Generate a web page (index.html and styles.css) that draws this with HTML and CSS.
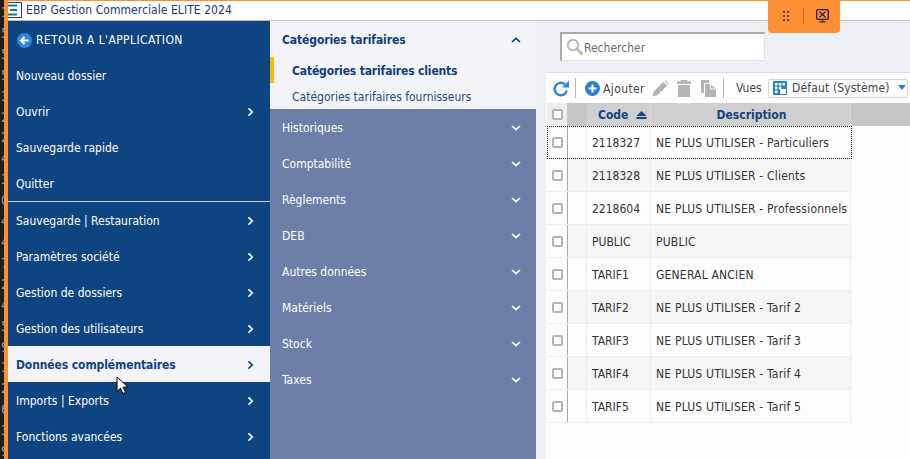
FILE: index.html
```html
<!DOCTYPE html>
<html lang="fr">
<head>
    <meta charset="UTF-8">
    <title>EBP Gestion Commerciale ELITE 2024</title>
    <link rel="stylesheet" href="styles.css">
</head>
<body>
    <svg class="defs" width="0" height="0">
        <symbol id="chev-right" viewBox="0 0 8 10"><path d="M2.500 1.300l3.700 3.700-3.700 3.700" fill="none" stroke="currentColor" stroke-width="1.700"/></symbol>
        <symbol id="chev-down" viewBox="0 0 10 8"><path d="M1 2l4 3.700L9 2" fill="none" stroke="currentColor" stroke-width="1.700"/></symbol>
        <symbol id="chev-up" viewBox="0 0 10 8"><path d="M1 6l4-3.700L9 6" fill="none" stroke="currentColor" stroke-width="1.700"/></symbol>
    </svg>

    <div class="window">
        <div class="edge">1 5 5 5 3 2 2 4 3 0 4 4 7 2 4 5 9 1 2 6 3 9</div>

        <div class="main">
            <header class="titlebar">
                <svg class="app-icon" width="14" height="16" viewBox="0 0 14 16">
                    <path d="M0 .5h13.500v15H0" fill="#fff" stroke="#1f3f7a"/>
                    <path d="M0 3.500h9M2 8h7M0 12.500h9" stroke="#0f7f86" stroke-width="2"/>
                </svg>
                <span>EBP Gestion Commerciale ELITE 2024</span>
            </header>

            <div class="content">
                <nav class="menu">
                    <a class="menu-item back">
                        <svg width="15" height="15" viewBox="0 0 15 15">
                            <circle cx="7.500" cy="7.500" r="7.500" fill="#2f86dc"/>
                            <path d="M11.500 7.500H5M7.500 4L4 7.500 7.500 11" fill="none" stroke="#fff" stroke-width="2"/>
                        </svg>
                        RETOUR A L'APPLICATION
                    </a>
                    <a class="menu-item">Nouveau dossier</a>
                    <a class="menu-item">Ouvrir <svg class="chev"><use href="#chev-right"/></svg></a>
                    <a class="menu-item">Sauvegarde rapide</a>
                    <a class="menu-item">Quitter</a>
                    <div class="menu-sep"></div>
                    <a class="menu-item">Sauvegarde | Restauration <svg class="chev"><use href="#chev-right"/></svg></a>
                    <a class="menu-item">Paramètres société <svg class="chev"><use href="#chev-right"/></svg></a>
                    <a class="menu-item">Gestion de dossiers <svg class="chev"><use href="#chev-right"/></svg></a>
                    <a class="menu-item">Gestion des utilisateurs <svg class="chev"><use href="#chev-right"/></svg></a>
                    <a class="menu-item active">Données complémentaires <svg class="chev"><use href="#chev-right"/></svg></a>
                    <a class="menu-item">Imports | Exports <svg class="chev"><use href="#chev-right"/></svg></a>
                    <a class="menu-item">Fonctions avancées <svg class="chev"><use href="#chev-right"/></svg></a>
                </nav>

                <div class="submenu">
                    <div class="sub-open">
                        <div class="sub-head">Catégories tarifaires <svg class="chev-v"><use href="#chev-up"/></svg></div>
                        <div class="sub-link current">Catégories tarifaires clients</div>
                        <div class="sub-link">Catégories tarifaires fournisseurs</div>
                    </div>
                    <div class="sub-item">Historiques <svg class="chev-v"><use href="#chev-down"/></svg></div>
                    <div class="sub-item">Comptabilité <svg class="chev-v"><use href="#chev-down"/></svg></div>
                    <div class="sub-item">Règlements <svg class="chev-v"><use href="#chev-down"/></svg></div>
                    <div class="sub-item">DEB <svg class="chev-v"><use href="#chev-down"/></svg></div>
                    <div class="sub-item">Autres données <svg class="chev-v"><use href="#chev-down"/></svg></div>
                    <div class="sub-item">Matériels <svg class="chev-v"><use href="#chev-down"/></svg></div>
                    <div class="sub-item">Stock <svg class="chev-v"><use href="#chev-down"/></svg></div>
                    <div class="sub-item">Taxes <svg class="chev-v"><use href="#chev-down"/></svg></div>
                </div>

                <section class="panel">
                    <div class="search">
                        <svg width="18" height="18" viewBox="0 0 18 18">
                            <circle cx="7" cy="7" r="5.200" fill="none" stroke="#b8b8b8" stroke-width="2"/>
                            <path d="M11 11l5.500 5.500" stroke="#b8b8b8" stroke-width="2.500"/>
                        </svg>
                        <span class="search-text">Rechercher</span>
                    </div>

                    <div class="card">
                        <div class="toolbar">
                            <svg class="tool-refresh" width="16" height="17" viewBox="0 0 16 17">
                                <path d="M13.800 10.500A6.200 6.200 0 1 1 11.800 4.300" fill="none" stroke="#2a83d8" stroke-width="2.400"/>
                                <path d="M9 7.500h7V.5z" fill="#2a83d8"/>
                            </svg>
                            <span class="tool-sep"></span>
                            <svg width="15" height="15" viewBox="0 0 15 15">
                                <circle cx="7.500" cy="7.500" r="7.500" fill="#2a7fd4"/>
                                <path d="M7.500 3.500v8M3.500 7.500h8" stroke="#fff" stroke-width="2"/>
                            </svg>
                            <span class="tool-label">Ajouter</span>
                            <svg class="tool-pencil" width="17" height="17" viewBox="0 0 17 17">
                                <path d="M.5 16.500l1.300-5L11.500 1.800l3.700 3.700-9.700 9.700z" fill="#b4b4b4"/>
                                <path d="M12.500.8l1-.5 3 3-.5 1z" fill="#b4b4b4"/>
                            </svg>
                            <svg class="tool-trash" width="14" height="17" viewBox="0 0 14 17">
                                <path d="M4 0h6l1 1.500h3v2.500H0V1.500h3zM1 5h12v12H1z" fill="#b4b4b4"/>
                            </svg>
                            <svg class="tool-copy" width="15" height="17" viewBox="0 0 15 17">
                                <path d="M0 0h8v3H3v10H0z" fill="#b4b4b4"/>
                                <path d="M4 4h5.500L15 9v8H4z" fill="#b4b4b4"/>
                                <path d="M9.500 4v5H15" fill="none" stroke="#fff"/>
                            </svg>
                            <span class="tool-sep wide"></span>
                            <span class="views-label">Vues</span>
                            <div class="views">
                                <svg width="14" height="14" viewBox="0 0 14 14">
                                    <rect width="14" height="14" rx="1" fill="#2a7fd4"/>
                                    <path d="M2 2h2.500v2.500H2zM5.800 2h2.500v2.500H5.800zM9.500 2H12v2.500H9.500zM2 5.800h2.500v2.500H2zM2 9.500h2.500V12H2zM5.800 5.800h2.500v2.500H5.800z" fill="#fff"/>
                                    <path d="M7 8h6v5H7z" fill="#fff"/>
                                </svg>
                                <span class="views-text">Défaut (Système)</span>
                                <i class="views-arrow"></i>
                            </div>
                        </div>

                        <div class="grid-head">
                            <div class="cell-check"><i class="check"></i></div>
                            <div class="cell-bar"></div>
                            <div class="cell-code">Code
                                <svg width="11" height="8" viewBox="0 0 11 8"><path d="M5.500 0l5 5H.5z M.5 6h10v2H.5z" fill="#17427f"/></svg>
                            </div>
                            <div class="cell-desc">Description</div>
                            <div class="cell-rest"></div>
                        </div>

                        <div class="grid-row focus">
                            <div class="cell-check"><i class="check"></i></div><div class="cell-bar"></div>
                            <div class="cell-code">2118327</div><div class="cell-desc">NE PLUS UTILISER - Particuliers</div>
                        </div>
                        <div class="grid-row alt">
                            <div class="cell-check"><i class="check"></i></div><div class="cell-bar"></div>
                            <div class="cell-code">2118328</div><div class="cell-desc">NE PLUS UTILISER - Clients</div>
                        </div>
                        <div class="grid-row">
                            <div class="cell-check"><i class="check"></i></div><div class="cell-bar"></div>
                            <div class="cell-code">2218604</div><div class="cell-desc">NE PLUS UTILISER - Professionnels</div>
                        </div>
                        <div class="grid-row alt">
                            <div class="cell-check"><i class="check"></i></div><div class="cell-bar"></div>
                            <div class="cell-code">PUBLIC</div><div class="cell-desc">PUBLIC</div>
                        </div>
                        <div class="grid-row">
                            <div class="cell-check"><i class="check"></i></div><div class="cell-bar"></div>
                            <div class="cell-code">TARIF1</div><div class="cell-desc">GENERAL ANCIEN</div>
                        </div>
                        <div class="grid-row alt">
                            <div class="cell-check"><i class="check"></i></div><div class="cell-bar"></div>
                            <div class="cell-code">TARIF2</div><div class="cell-desc">NE PLUS UTILISER - Tarif 2</div>
                        </div>
                        <div class="grid-row">
                            <div class="cell-check"><i class="check"></i></div><div class="cell-bar"></div>
                            <div class="cell-code">TARIF3</div><div class="cell-desc">NE PLUS UTILISER - Tarif 3</div>
                        </div>
                        <div class="grid-row alt">
                            <div class="cell-check"><i class="check"></i></div><div class="cell-bar"></div>
                            <div class="cell-code">TARIF4</div><div class="cell-desc">NE PLUS UTILISER - Tarif 4</div>
                        </div>
                        <div class="grid-row">
                            <div class="cell-check"><i class="check"></i></div><div class="cell-bar"></div>
                            <div class="cell-code">TARIF5</div><div class="cell-desc">NE PLUS UTILISER - Tarif 5</div>
                        </div>
                    </div>
                </section>
            </div>
        </div>

        <div class="float-tab">
            <svg width="6" height="10" viewBox="0 0 6 10">
                <path d="M0 0h2v2H0zM4 0h2v2H4zM0 4h2v2H0zM4 4h2v2H4zM0 8h2v2H0zM4 8h2v2H4z" fill="#6a4620"/>
            </svg>
            <span class="float-sep"></span>
            <svg width="13" height="14" viewBox="0 0 13 14">
                <rect x="0.700" y="0.700" width="11.600" height="9.600" rx="1" fill="none" stroke="#222" stroke-width="1.300"/>
                <path d="M3.500 2.800l6 5.500M9.500 2.800l-6 5.500" stroke="#222" stroke-width="1.200"/>
                <path d="M6.500 11v1.500M3 13h7" stroke="#222" stroke-width="1.200"/>
            </svg>
        </div>

        <svg class="cursor" width="14" height="20" viewBox="0 0 14 20">
            <path d="M1 1v14.500l3.500-3.300 2.300 5.300 2.700-1.200-2.300-5.200H12z" fill="#fff" stroke="#000"/>
        </svg>
    </div>
</body>
</html>
```

FILE: styles.css
```css
* {
    box-sizing: border-box;
}

html, body {
    margin: 0;
    height: 100%;
    overflow: hidden;
}

body {
    font-family: "DejaVu Sans Condensed", "DejaVu Sans", sans-serif;
    font-stretch: condensed;
    font-size: 12px;
    background: #fff;
}

.defs {
    position: absolute;
}

.window {
    position: relative;
    display: flex;
    width: 910px;
    height: 459px;
    overflow: hidden;
}

/* what is left of the window behind, cut off by the frame */
.edge {
    width: 4px;
    flex: none;
    background: #1e1e1e;
    color: #8f98a3;
    font-size: 14px;
    line-height: 20.9px;
    padding: 2px 0 0 1px;
    overflow: hidden;
    white-space: normal;
}

.main {
    flex: 1;
    display: flex;
    flex-direction: column;
    min-width: 0;
    border-top: 1px solid #ff8f33;
    border-left: 4px solid #ff8f33;
}

.titlebar {
    height: 20px;
    flex: none;
    display: flex;
    align-items: center;
    gap: 4px;
    padding: 0 0 1px 0;
    background: #fff;
    border-bottom: 1px solid #bdbdbd;
    color: #163a75;
    letter-spacing: 0.06px;
}

.content {
    flex: 1;
    display: flex;
    min-height: 0;
}

/* left menu */
.menu {
    width: 262px;
    flex: none;
    background: #0f4483;
}

.menu-item {
    height: 36px;
    display: flex;
    align-items: center;
    justify-content: space-between;
    padding: 2px 16px 0 8px;
    color: #fff;
}

.menu-item.back {
    justify-content: flex-start;
    gap: 4px;
    padding-left: 9px;
    letter-spacing: 0.4px;
}

.menu-item.active {
    background: #f4f4f8;
    color: #0f4483;
    font-weight: 700;
    letter-spacing: -0.1px;
}

.menu-sep {
    height: 1px;
    background: #c5d0e0;
}

.chev {
    width: 8px;
    height: 10px;
}

/* second column */
.submenu {
    width: 266px;
    flex: none;
    background: #6b7fa9;
}

.sub-open {
    background: #f4f4f8;
    height: 88px;
}

.sub-head {
    height: 36px;
    display: flex;
    align-items: center;
    justify-content: space-between;
    padding: 2px 15px 0 12px;
    color: #0f3f7f;
    font-weight: 700;
    letter-spacing: -0.1px;
}

.sub-link {
    height: 26px;
    display: flex;
    align-items: center;
    padding: 2px 0 0 22px;
    color: #1d4a8a;
}

.sub-link.current {
    border-left: 4px solid #ffb900;
    padding-left: 18px;
    color: #0f3f7f;
    font-weight: 700;
    letter-spacing: -0.15px;
}

.sub-item {
    height: 36px;
    display: flex;
    align-items: center;
    justify-content: space-between;
    padding: 2px 15px 0 12px;
    color: #fff;
}

.chev-v {
    width: 10px;
    height: 8px;
    color: #fff;
}

.sub-head .chev-v {
    color: #0f3f7f;
}

/* right part */
.panel {
    flex: 1;
    min-width: 0;
    background: #eeeff4;
    padding: 11px 0 0 10px;
}

.search {
    width: 205px;
    height: 29px;
    margin-left: 14px;
    display: flex;
    align-items: center;
    padding-left: 4px;
    background: #fff;
    border: 1px solid #e2e2e6;
    border-top: 2px solid #a9a9a9;
    border-left: 2px solid #a9a9a9;
    color: #6d6d6d;
}

.search-text {
    padding-top: 2px;
}

.card {
    height: 387px;
    margin-top: 11px;
    background: #fdfdfd;
    border-top: 1px solid #dcdce0;
}

.toolbar {
    height: 30px;
    display: flex;
    align-items: center;
    padding-left: 7px;
    background: #fff;
    color: #444;
}

.tool-sep {
    width: 1px;
    height: 20px;
    margin: 0 9px 0 6px;
    background: #b5b5b5;
}

.tool-sep.wide {
    margin: 0 12px 0 7px;
}

.tool-label {
    width: 42px;
    margin-left: 3px;
    margin-right: 7px;
    padding-top: 1px;
    letter-spacing: 0.4px;
}

.tool-pencil {
    margin-right: 8px;
}

.tool-trash {
    margin-right: 10px;
}

.views-label {
    width: 28px;
    margin-right: 4px;
}

.views {
    width: 140px;
    height: 19px;
    display: flex;
    align-items: center;
    gap: 5px;
    padding-left: 4px;
    border: 1px solid #d5d5d5;
    border-radius: 2px;
    position: relative;
}

.views-text {
    letter-spacing: 0.15px;
}

.views-arrow {
    position: absolute;
    right: 1px;
    top: 5px;
    border: 4px solid transparent;
    border-top: 5px solid #2a83d8;
}

.grid-head,
.grid-row {
    display: flex;
    align-items: stretch;
    margin-left: 1px;
}

.grid-head {
    height: 23px;
    background: #c6c6c6;
    color: #17427f;
    font-weight: 700;
}

.grid-row {
    width: 305px;
    height: 33px;
    background: #fdfdfd;
    border-bottom: 1px solid #eeeeee;
    color: #333;
}

.grid-row.alt {
    background: #f5f5f5;
}

.grid-row.focus {
    outline: 1px dotted #222;
    outline-offset: -1px;
}

.cell-check {
    width: 20px;
    display: flex;
    align-items: center;
    justify-content: center;
    background: #fdfdfd;
}

.grid-head .cell-check {
    background: #eeeeee;
}

.check {
    width: 11px;
    height: 11px;
    background: #fff;
    border: 2px solid #b5b5b5;
    border-radius: 2px;
}

.cell-bar {
    width: 20px;
    border-left: 1px solid #a8a8a8;
    border-right: 1px solid #eeeeee;
}

.grid-head .cell-bar {
    border-color: #c6c6c6;
}

.cell-code {
    width: 64px;
    display: flex;
    align-items: center;
    padding: 2px 0 0 5px;
    border-right: 1px solid #eeeeee;
}

.grid-head .cell-code {
    justify-content: space-between;
    padding: 0 3px 0 11px;
    background: #cfcfcf;
    border-right-color: #d8d8d8;
}

.cell-desc {
    width: 200px;
    display: flex;
    align-items: center;
    padding: 2px 0 0 5px;
    white-space: nowrap;
    letter-spacing: 0.2px;
    border-right: 1px solid #eeeeee;
}

.grid-head .cell-desc {
    justify-content: center;
    padding: 0 0 0 2px;
    letter-spacing: 0;
    background: #cfcfcf;
    border-right-color: #d8d8d8;
}

.cell-rest {
    flex: 1;
}

/* floating control over the title bar */
.float-tab {
    position: absolute;
    left: 768px;
    top: 1px;
    width: 72px;
    height: 32px;
    display: flex;
    align-items: center;
    gap: 14px;
    padding: 0 0 3px 15px;
    background: #ff8f33;
    border-radius: 0 0 4px 4px;
}

.float-sep {
    width: 1px;
    height: 16px;
    margin-right: -2px;
    background: #c9701f;
}

.cursor {
    position: absolute;
    left: 116px;
    top: 376px;
}
```
